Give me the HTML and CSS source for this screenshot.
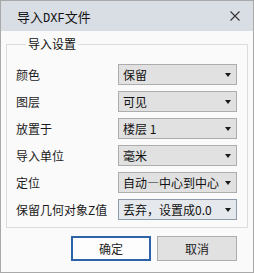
FILE: index.html
```html
<!DOCTYPE html>
<html lang="zh-CN">
<head>
    <meta charset="UTF-8">
    <title>导入DXF文件</title>
    <link rel="stylesheet" href="styles.css">
</head>
<body>
    <div class="dialog">
        <div class="titlebar">
            <span class="title">导入<span class="latin">DXF</span>文件</span>
            <svg class="close" width="10" height="10" viewBox="0 0 10 10">
                <path d="M0.5 0.5 L9.5 9.5 M9.5 0.5 L0.5 9.5" stroke="#333" stroke-width="1.1" fill="none"/>
            </svg>
        </div>

        <div class="content">
            <fieldset class="group">
                <legend>导入设置</legend>

                <div class="row">
                    <span class="label">颜色</span>
                    <div class="select"><span>保留</span><i class="arrow"></i></div>
                </div>
                <div class="row">
                    <span class="label">图层</span>
                    <div class="select"><span>可见</span><i class="arrow"></i></div>
                </div>
                <div class="row">
                    <span class="label">放置于</span>
                    <div class="select"><span>楼层 1</span><i class="arrow"></i></div>
                </div>
                <div class="row">
                    <span class="label">导入单位</span>
                    <div class="select"><span>毫米</span><i class="arrow"></i></div>
                </div>
                <div class="row">
                    <span class="label">定位</span>
                    <div class="select"><span>自动—中心到中心</span><i class="arrow"></i></div>
                </div>
                <div class="row">
                    <span class="label">保留几何对象Z值</span>
                    <div class="select hover"><span>丢弃，设置成0.0</span><i class="arrow"></i></div>
                </div>
            </fieldset>

            <div class="buttons">
                <button class="btn primary">确定</button>
                <button class="btn">取消</button>
            </div>
        </div>
    </div>
</body>
</html>
```

FILE: styles.css
```css
* {
    box-sizing: border-box;
    margin: 0;
    padding: 0;
}
body {
    font-family: 'Noto Sans CJK SC', 'Noto Sans', sans-serif;
    font-size: 12px;
    color: #1a1a1a;
    background: #fafafa;
}
.dialog {
    width: 254px;
    height: 273px;
    border: 1px solid #a9a9a9;
    background: #fafafa;
    display: flex;
    flex-direction: column;
}
.titlebar {
    height: 30px;
    background: #d9dde4;
    display: flex;
    align-items: center;
    justify-content: space-between;
    padding: 0 13px 0 16px;
}
.title {
    font-size: 13px;
    color: #111;
}
.title .latin {
    font-family: 'Liberation Mono', monospace;
    font-size: 12px;
}
.close {
    display: block;
}
.content {
    padding: 5px 5px 0 5px;
}
.group {
    border: 1px solid #dcdcdc;
    padding: 12px 10px 7px 9px;
    display: flex;
    flex-direction: column;
    gap: 6px;
}
.group legend {
    margin-left: 10px;
    padding: 0 2px;
    line-height: 16px;
    font-size: 12px;
    color: #111;
}
.row {
    display: grid;
    grid-template-columns: 102px 1fr;
    align-items: center;
    height: 21px;
}
.select {
    height: 21px;
    border: 1px solid #adadad;
    background: #e1e1e1;
    display: flex;
    align-items: center;
    justify-content: space-between;
    padding: 0 5px 0 4px;
    color: #111;
    white-space: nowrap;
}
.select.hover {
    border-color: #8e9bab;
    background: #e5e8ec;
}
.arrow {
    width: 0;
    height: 0;
    border-left: 3px solid transparent;
    border-right: 3px solid transparent;
    border-top: 4px solid #1a1a1a;
}
.buttons {
    display: flex;
    justify-content: flex-end;
    gap: 6px;
    margin-top: 8px;
    padding-right: 11px;
}
.btn {
    width: 80px;
    height: 25px;
    font-family: inherit;
    font-size: 12px;
    color: #222;
    border: 1px solid #adadad;
    background: #e1e1e1;
}
.btn.primary {
    border: 2px solid #2c62a8;
    background: #fdfdfd;
}
```
